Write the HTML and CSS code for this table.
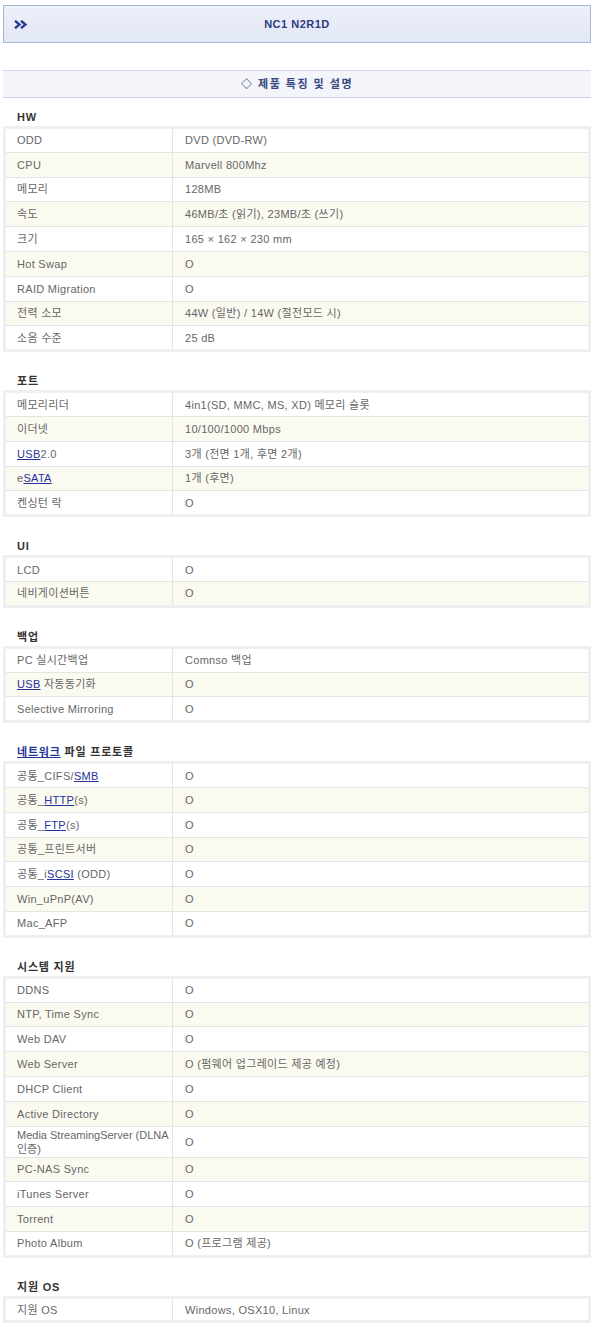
FILE: index.html
```html
<!DOCTYPE html>
<html lang="ko">
<head>
    <meta charset="UTF-8">
    <title>NC1 N2R1D</title>
    <link rel="stylesheet" href="styles.css">
</head>
<body>
    <div class="page">
        <div class="model-bar">
            <span class="arrows">
                <svg width="13" height="9" viewBox="0 0 13 9">
                    <path d="M1 0.8 L5.5 4.5 L1 8.2" fill="none" stroke="#2b3b8f" stroke-width="2.4"/>
                    <path d="M7 0.8 L11.5 4.5 L7 8.2" fill="none" stroke="#2b3b8f" stroke-width="2.4"/>
                </svg>
            </span>
            <span class="model-name">NC1 N2R1D</span>
            <span></span>
        </div>

        <div class="spec-bar">◇ 제품 특징 및 설명</div>

        <div class="group first">
            <h3 class="group-title">HW</h3>
            <table class="spec-table">
                <colgroup><col class="label-col"><col></colgroup>
                <tr><td>ODD</td><td>DVD (DVD-RW)</td></tr>
                <tr><td>CPU</td><td>Marvell 800Mhz</td></tr>
                <tr><td>메모리</td><td>128MB</td></tr>
                <tr><td>속도</td><td>46MB/초 (읽기), 23MB/초 (쓰기)</td></tr>
                <tr><td>크기</td><td>165 × 162 × 230 mm</td></tr>
                <tr><td>Hot Swap</td><td>O</td></tr>
                <tr><td>RAID Migration</td><td>O</td></tr>
                <tr><td>전력 소모</td><td>44W (일반) / 14W (절전모드 시)</td></tr>
                <tr><td>소음 수준</td><td>25 dB</td></tr>
            </table>
        </div>

        <div class="group">
            <h3 class="group-title">포트</h3>
            <table class="spec-table">
                <colgroup><col class="label-col"><col></colgroup>
                <tr><td>메모리리더</td><td>4in1(SD, MMC, MS, XD) 메모리 슬롯</td></tr>
                <tr><td>이더넷</td><td>10/100/1000 Mbps</td></tr>
                <tr><td><a href="#">USB</a>2.0</td><td>3개 (전면 1개, 후면 2개)</td></tr>
                <tr><td>e<a href="#">SATA</a></td><td>1개 (후면)</td></tr>
                <tr><td>켄싱턴 락</td><td>O</td></tr>
            </table>
        </div>

        <div class="group">
            <h3 class="group-title">UI</h3>
            <table class="spec-table">
                <colgroup><col class="label-col"><col></colgroup>
                <tr><td>LCD</td><td>O</td></tr>
                <tr><td>네비게이션버튼</td><td>O</td></tr>
            </table>
        </div>

        <div class="group">
            <h3 class="group-title">백업</h3>
            <table class="spec-table">
                <colgroup><col class="label-col"><col></colgroup>
                <tr><td>PC 실시간백업</td><td>Comnso 백업</td></tr>
                <tr><td><a href="#">USB</a> 자동동기화</td><td>O</td></tr>
                <tr><td>Selective Mirroring</td><td>O</td></tr>
            </table>
        </div>

        <div class="group">
            <h3 class="group-title"><a href="#">네트워크</a> 파일 프로토콜</h3>
            <table class="spec-table">
                <colgroup><col class="label-col"><col></colgroup>
                <tr><td>공통_CIFS/<a href="#">SMB</a></td><td>O</td></tr>
                <tr><td>공통_<a href="#">HTTP</a>(s)</td><td>O</td></tr>
                <tr><td>공통_<a href="#">FTP</a>(s)</td><td>O</td></tr>
                <tr><td>공통_프린트서버</td><td>O</td></tr>
                <tr><td>공통_i<a href="#">SCSI</a> (ODD)</td><td>O</td></tr>
                <tr><td>Win_uPnP(AV)</td><td>O</td></tr>
                <tr><td>Mac_AFP</td><td>O</td></tr>
            </table>
        </div>

        <div class="group">
            <h3 class="group-title">시스템 지원</h3>
            <table class="spec-table">
                <colgroup><col class="label-col"><col></colgroup>
                <tr><td>DDNS</td><td>O</td></tr>
                <tr><td>NTP, Time Sync</td><td>O</td></tr>
                <tr><td>Web DAV</td><td>O</td></tr>
                <tr><td>Web Server</td><td>O (펌웨어 업그레이드 제공 예정)</td></tr>
                <tr><td>DHCP Client</td><td>O</td></tr>
                <tr><td>Active Directory</td><td>O</td></tr>
                <tr><td class="tight">Media StreamingServer (DLNA 인증)</td><td>O</td></tr>
                <tr><td>PC-NAS Sync</td><td>O</td></tr>
                <tr><td>iTunes Server</td><td>O</td></tr>
                <tr><td>Torrent</td><td>O</td></tr>
                <tr><td>Photo Album</td><td>O (프로그램 제공)</td></tr>
            </table>
        </div>

        <div class="group">
            <h3 class="group-title">지원 OS</h3>
            <table class="spec-table">
                <colgroup><col class="label-col"><col></colgroup>
                <tr><td>지원 OS</td><td>Windows, OSX10, Linux</td></tr>
            </table>
        </div>
    </div>
</body>
</html>
```

FILE: styles.css
```css
body {
    margin: 0;
    background: #ffffff;
    font-family: "Liberation Sans", Arial, "Noto Sans CJK KR", sans-serif;
    font-size: 11px;
    color: #666666;
}

.page {
    padding: 5px 4px 8px 3px;
}

/* top model bar */
.model-bar {
    display: grid;
    grid-template-columns: 1fr auto 1fr;
    align-items: center;
    height: 36px;
    border: 1px solid #aab4d4;
    background: linear-gradient(#edf0fa, #e2e7f5);
}

.arrows {
    padding-left: 10px;
    display: flex;
    align-items: center;
}

.model-name {
    font-weight: bold;
    color: #2d3a7c;
    font-size: 11px;
    letter-spacing: 0.5px;
}

.spec-bar {
    margin-top: 27px;
    height: 26px;
    line-height: 26px;
    text-align: center;
    border-top: 1px solid #d3d9e8;
    border-bottom: 1px solid #c9d0e2;
    background: #f3f5fa;
    color: #3a4881;
    font-weight: bold;
    font-size: 11px;
    letter-spacing: 1.5px;
}

/* spec groups */
.group {
    margin-top: 20px;
}

.group.first {
    margin-top: 10px;
}

.group-title {
    margin: 0;
    padding-left: 14px;
    font-size: 11px;
    line-height: 18px;
    color: #333333;
    letter-spacing: 0.8px;
}

.group-title a {
    color: #23339a;
}

.spec-table {
    width: 100%;
    table-layout: fixed;
    border-collapse: collapse;
    border: 3px solid #efefef;
}

.label-col {
    width: 168px;
}

.spec-table tr {
    height: 24.8px;
}

.spec-table tr:nth-child(odd) {
    background: #ffffff;
}

.spec-table tr:nth-child(even) {
    background: #fbfaf1;
}

.spec-table td {
    padding: 1px 3px 1px 11px;
    line-height: 14px;
    border-bottom: 1px solid #e4e4e4;
    vertical-align: middle;
    letter-spacing: 0.3px;
}

.spec-table td.tight {
    letter-spacing: 0;
}

.spec-table tr:last-child td {
    border-bottom: none;
}

.spec-table td:first-child {
    border-right: 1px solid #e4e4e4;
}

.spec-table td + td {
    padding-left: 12px;
}

.spec-table a {
    color: #23339a;
    text-decoration: underline;
}
```
